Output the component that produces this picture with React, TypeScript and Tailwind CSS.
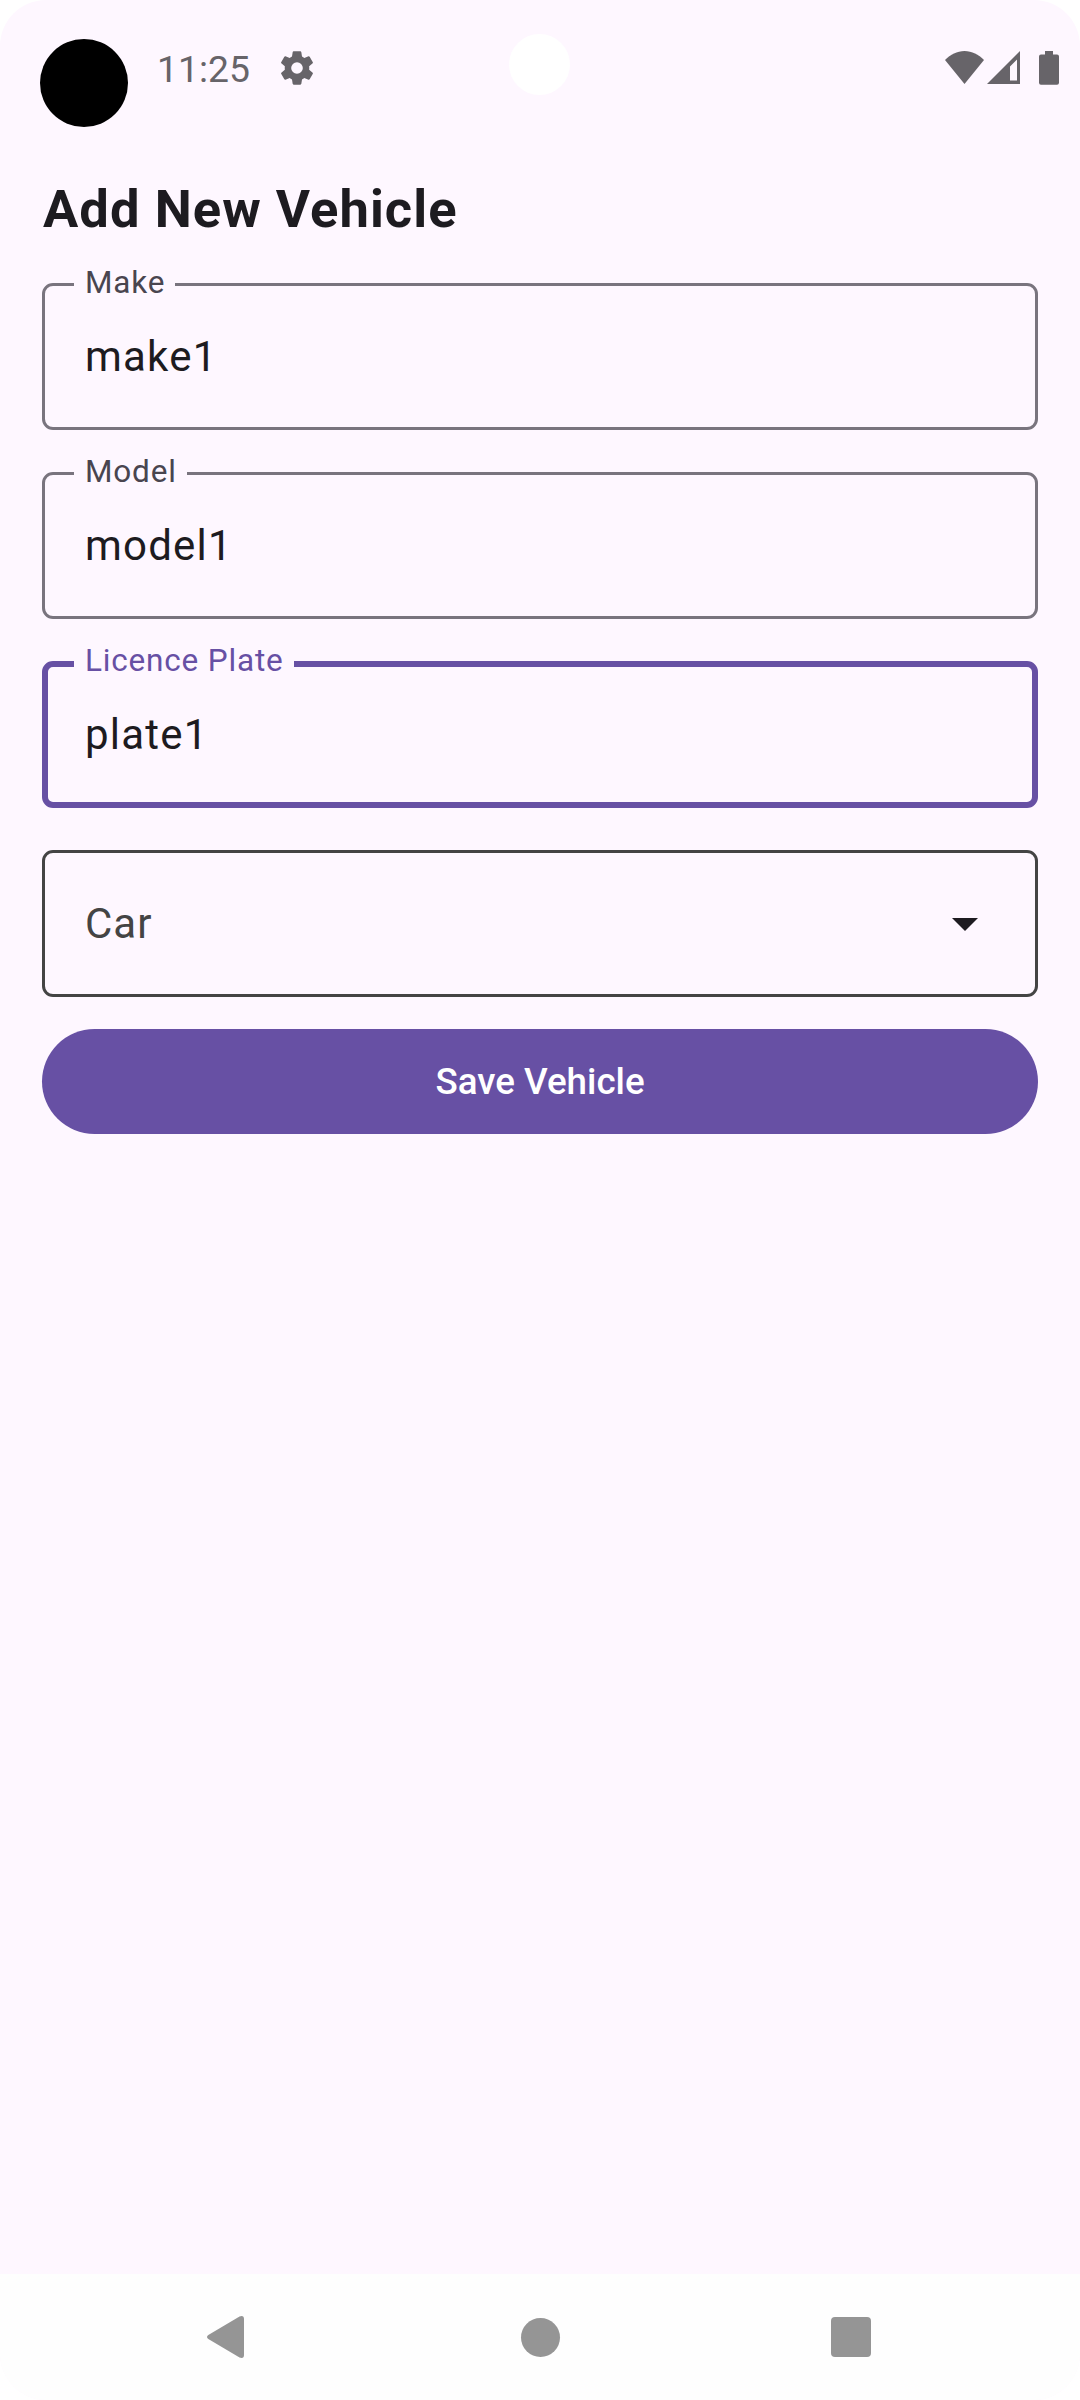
type FieldProps = { label: string; value: string; focused?: boolean };

function OutlinedField({ label, value, focused = false }: FieldProps) {
  return (
    <div
      className={
        focused
          ? "relative flex h-[147px] items-center rounded-[11px] border-[6px] border-[#6750a4] pl-[37px]"
          : "relative flex h-[147px] items-center rounded-[11px] border-[3px] border-[#79747e] pl-[40px]"
      }
    >
      <span
        className={
          focused
            ? "absolute -top-[26px] left-[26px] h-10 bg-[#fef7ff] pr-[10px] pl-[11px] text-[31.5px] leading-10 tracking-[0.82px] text-[#6750a4]"
            : "absolute -top-[23px] left-[29px] h-10 bg-[#fef7ff] pr-[10px] pl-[11px] text-[31.5px] leading-10 tracking-[0.8px] text-[#49454f]"
        }
      >
        {label}
      </span>
      <span className="text-[42px] leading-[63px] tracking-[1.2px] text-[#1d1b20]">{value}</span>
    </div>
  );
}

function StatusBar() {
  return (
    <header className="relative flex h-[178px] items-start justify-between pr-[21px] pl-10 text-[#676469]">
      <div className="flex">
        <div className="mt-[39px] size-[88px] rounded-full bg-black" />
        <span className="mt-[47px] ml-[29px] w-[95px] text-[37.3px] leading-[44px]">11:25</span>
        <svg className="mt-12 ml-[25px] size-10" viewBox="0 0 24 24" fill="currentColor">
          <path
            fillRule="evenodd"
            d="M10 2H14Q14.500 2 14.600 2.500L15 5.100Q15.800 5.500 16.400 6L18.900 5Q19.300 4.900 19.600 5.200L21.500 8.500Q21.700 8.900 21.400 9.200L19.300 10.900Q19.400 12 19.300 13.100L21.400 14.800Q21.700 15.100 21.500 15.500L19.600 18.800Q19.300 19.100 18.900 19L16.400 18Q15.800 18.500 15 18.900L14.600 21.500Q14.500 22 14 22H10Q9.500 22 9.400 21.500L9 18.900Q8.200 18.500 7.600 18L5.100 19Q4.700 19.100 4.400 18.800L2.500 15.500Q2.300 15.100 2.600 14.800L4.700 13.100Q4.600 12 4.700 10.900L2.600 9.200Q2.300 8.900 2.500 8.500L4.400 5.200Q4.700 4.900 5.100 5L7.600 6Q8.200 5.500 9 5.100L9.400 2.500Q9.500 2 10 2ZM12 8.500A3.500 3.500 0 1 0 12 15.500A3.500 3.500 0 1 0 12 8.500Z"
          />
        </svg>
      </div>
      <div className="absolute top-[34px] left-[509px] size-[61px] rounded-full bg-white" />
      <div className="mt-[51px] flex">
        <svg className="h-[34px] w-[39px]" viewBox="0 0 39 34" fill="currentColor">
          <path d="M0 9C5.500 3.500 12 0 19.500 0S33.500 3.500 39 9L19.500 33Z" />
        </svg>
        <svg className="ml-[3px] h-[34px] w-[33px]" viewBox="0 0 33 34" fill="currentColor">
          <path fillRule="evenodd" d="M33 0V33H0ZM30 8.500L23 15.500V29.500H30Z" />
        </svg>
        <svg className="ml-[19px] h-[34px] w-5" viewBox="0 0 20 34" fill="currentColor">
          <path d="M6 0H14V3.500H18Q20 3.500 20 5.500V31.800Q20 33.800 18 33.800H2Q0 33.800 0 31.800V5.500Q0 3.500 2 3.500H6Z" />
        </svg>
      </div>
    </header>
  );
}

function NavigationBar() {
  return (
    <nav className="flex h-[126px] items-center bg-[#fefefe] pl-[207px] text-[#959595]">
      <svg className="h-[42px] w-[37px]" viewBox="0 0 37 42" fill="currentColor">
        <path d="M1.300 19L32.500 .5Q37 -1 37 3V39Q37 43 32.500 41.500L1.300 23Q-1.300 21 1.300 19Z" />
      </svg>
      <div className="ml-[276.500px] size-[39px] rounded-full bg-[#959595]" />
      <div className="ml-[271px] size-10 rounded bg-[#959595]" />
    </nav>
  );
}

export default function App() {
  return (
    <div className="h-[2400px] w-[1080px] bg-white font-['Roboto',sans-serif]">
      <div className="flex h-full flex-col overflow-hidden rounded-[46px] bg-[#fef7ff]">
        <StatusBar />
        <main className="flex flex-1 flex-col px-[42px]">
          <h1 className="mb-[42px] pl-px text-[52.5px] leading-[63px] font-bold tracking-[1.05px] text-[#1d1b20]">
            Add New Vehicle
          </h1>
          <div className="flex flex-col gap-[42px]">
            <OutlinedField label="Make" value="make1" />
            <OutlinedField label="Model" value="model1" />
            <OutlinedField label="Licence Plate" value="plate1" focused />
            <div className="flex h-[147px] items-center justify-between rounded-[11px] border-[3px] border-[#444444] pr-[57.500px] pl-10">
              <span className="text-[42px] leading-[63px] tracking-[1px] text-[#444444]">Car</span>
              <svg className="mt-[2px] h-[13px] w-[26px] text-[#1d1b20]" viewBox="0 0 26 13" fill="currentColor">
                <path d="M0 0H26L13 13Z" />
              </svg>
            </div>
          </div>
          <button className="mt-8 h-[105px] rounded-full bg-[#6750a4] text-[36.75px] font-medium tracking-[0px] text-white">
            Save Vehicle
          </button>
        </main>
        <NavigationBar />
      </div>
    </div>
  );
}
